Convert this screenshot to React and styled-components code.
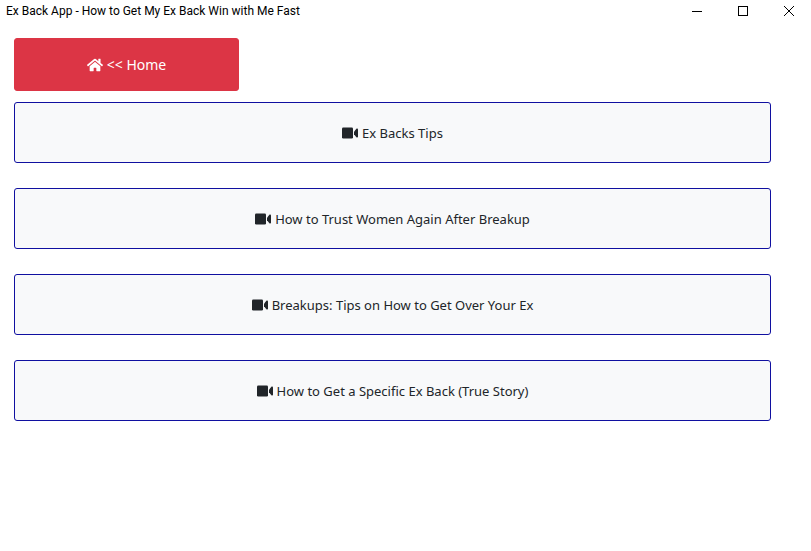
import React from 'react'
import styled, { createGlobalStyle } from 'styled-components';
import { FaHome } from 'react-icons/fa';

const GlobalStyle = createGlobalStyle`
    * {
        box-sizing: border-box;
    }
    body {
        margin: 0;
        background: #fff;
        color: #212529;
        font-family: "Noto Sans", "Open Sans", sans-serif;
        font-size: 13px;
    }
`

const TitleBar = styled.header`
    display: flex;
    align-items: center;
    justify-content: space-between;
    height: 22px;
    padding-left: 6px;
    color: #000;
`

const Title = styled.h1`
    margin: 0;
    font-family: Roboto, sans-serif;
    font-size: 12px;
    font-weight: 400;
    line-height: 22px;
    white-space: nowrap;
`

const WindowControls = styled.div`
    display: flex;
`

const WindowButton = styled.button`
    display: flex;
    align-items: center;
    justify-content: center;
    width: 46px;
    height: 22px;
    padding: 0 0 0 2px;
    border: 0;
    background: transparent;
    color: #000;
`

const Content = styled.main`
    padding: 16px 40px 16px 14px;
`

const ActionButton = styled.button`
    display: flex;
    align-items: center;
    justify-content: center;
    gap: 4px;
    border-radius: 3px;
    font: inherit;
    line-height: 21px;
    cursor: pointer;
`

const HomeButton = styled(ActionButton)`
    width: 225px;
    height: 53px;
    margin-bottom: 11px;
    border: 1px solid #dc3545;
    background: #dc3545;
    color: #fff;
    font-size: 14px;
`

const VideoList = styled.nav`
    display: grid;
    gap: 25px;
`

const VideoButton = styled(ActionButton)`
    width: 100%;
    height: 61px;
    border: 1px solid #1010a0;
    background: #f8f9fa;
    color: #212529;
`

const VideoLabel = styled.span`
    padding-top: 2px;
`

const videos = [
    'Ex Backs Tips',
    'How to Trust Women Again After Breakup',
    'Breakups: Tips on How to Get Over Your Ex',
    'How to Get a Specific Ex Back (True Story)',
]

function VideoIcon() {
    return (
        <svg width="16" height="16" viewBox="0 0 16 16" fill="currentColor" aria-hidden="true">
            <rect y="2.5" width="11" height="11" rx="1.3" />
            <path d="M12 6.7L14.4 3.8c.6-.7 1.6-.5 1.6.4v7.6c0 .9-1 1.1-1.6.4L12 9.3z" />
        </svg>
    )
}

export default function App() {
    return (
        <>
            <GlobalStyle />
            <TitleBar>
                <Title>Ex Back App - How to Get My Ex Back Win with Me Fast</Title>
                <WindowControls>
                    <WindowButton aria-label="Minimize">
                        <svg width="10" height="10" shapeRendering="crispEdges">
                            <path d="M0 5.5h10" stroke="currentColor" />
                        </svg>
                    </WindowButton>
                    <WindowButton aria-label="Maximize">
                        <svg width="10" height="10" shapeRendering="crispEdges">
                            <path d="M.5.5h9v9h-9z" fill="none" stroke="currentColor" />
                        </svg>
                    </WindowButton>
                    <WindowButton aria-label="Close">
                        <svg width="10" height="10">
                            <path d="M0 0l10 10M10 0L0 10" stroke="currentColor" />
                        </svg>
                    </WindowButton>
                </WindowControls>
            </TitleBar>
            <Content>
                <HomeButton>
                    <FaHome size={16} />
                    &lt;&lt; Home
                </HomeButton>
                <VideoList>
                    {videos.map(video => (
                        <VideoButton key={video}>
                            <VideoIcon />
                            <VideoLabel>{video}</VideoLabel>
                        </VideoButton>
                    ))}
                </VideoList>
            </Content>
        </>
    )
}
